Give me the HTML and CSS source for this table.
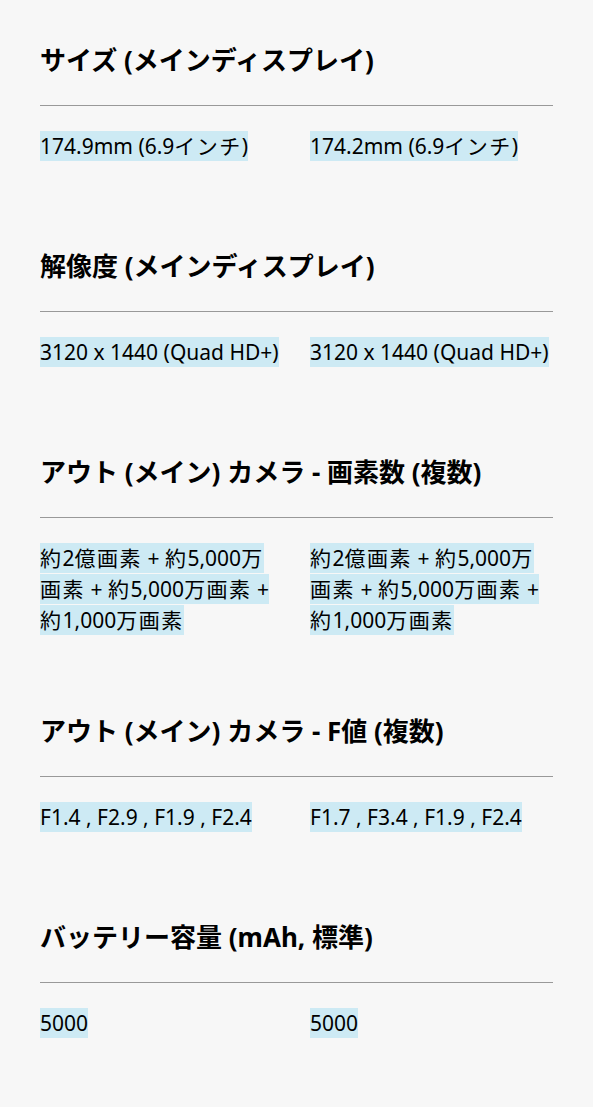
FILE: index.html
```html
<!DOCTYPE html>
<html lang="ja">
<head>
<meta charset="utf-8">
<title>Specs</title>
<link rel="stylesheet" href="styles.css">
</head>
<body>
<main class="specs">
  <section class="spec">
    <h2 class="spec-title">サイズ (メインディスプレイ)</h2>
    <div class="spec-values">
      <p class="spec-value"><span class="hl">174.9mm (6.9<span class="ja">インチ</span>)</span></p>
      <p class="spec-value"><span class="hl">174.2mm (6.9<span class="ja">インチ</span>)</span></p>
    </div>
  </section>
  <section class="spec">
    <h2 class="spec-title">解像度 (メインディスプレイ)</h2>
    <div class="spec-values">
      <p class="spec-value"><span class="hl">3120 x 1440 (Quad HD+)</span></p>
      <p class="spec-value"><span class="hl">3120 x 1440 (Quad HD+)</span></p>
    </div>
  </section>
  <section class="spec">
    <h2 class="spec-title">アウト (メイン) カメラ - 画素数 (複数)</h2>
    <div class="spec-values">
      <p class="spec-value"><span class="hl"><span class="ja">約</span>2<span class="ja">億画素</span> + <span class="ja">約</span>5,000<span class="ja">万画素</span> + <span class="ja">約</span>5,000<span class="ja">万画素</span> + <span class="ja">約</span>1,000<span class="ja">万画素</span></span></p>
      <p class="spec-value"><span class="hl"><span class="ja">約</span>2<span class="ja">億画素</span> + <span class="ja">約</span>5,000<span class="ja">万画素</span> + <span class="ja">約</span>5,000<span class="ja">万画素</span> + <span class="ja">約</span>1,000<span class="ja">万画素</span></span></p>
    </div>
  </section>
  <section class="spec">
    <h2 class="spec-title">アウト (メイン) カメラ - F値 (複数)</h2>
    <div class="spec-values">
      <p class="spec-value"><span class="hl">F1.4 , F2.9 , F1.9 , F2.4</span></p>
      <p class="spec-value"><span class="hl">F1.7 , F3.4 , F1.9 , F2.4</span></p>
    </div>
  </section>
  <section class="spec">
    <h2 class="spec-title">バッテリー容量 (mAh, 標準)</h2>
    <div class="spec-values">
      <p class="spec-value"><span class="hl">5000</span></p>
      <p class="spec-value"><span class="hl">5000</span></p>
    </div>
  </section>
</main>
</body>
</html>
```

FILE: styles.css
```css
html, body {
  margin: 0;
  padding: 0;
  background: #f7f7f7;
}

body {
  font-family: "Noto Sans", "Noto Sans CJK JP", sans-serif;
  color: #000;
}

.specs {
  padding: 43px 40px 40px;
  display: flex;
  flex-direction: column;
  gap: 78px;
}

.spec-title {
  margin: 0;
  font-size: 26px;
  font-weight: 700;
  line-height: 34px;
  padding-bottom: 28px;
  border-bottom: 1px solid #999;
}

.spec-values {
  display: grid;
  grid-template-columns: 1fr 1fr;
  column-gap: 27px;
  padding-top: 25px;
}

.spec-value {
  margin: 0;
  font-size: 21px;
  line-height: 31px;
  min-height: 40px;
}

.hl {
  background: #cdeaf4;
  padding: 1px 0;
}

.ja {
  letter-spacing: 1.5px;
}
```
